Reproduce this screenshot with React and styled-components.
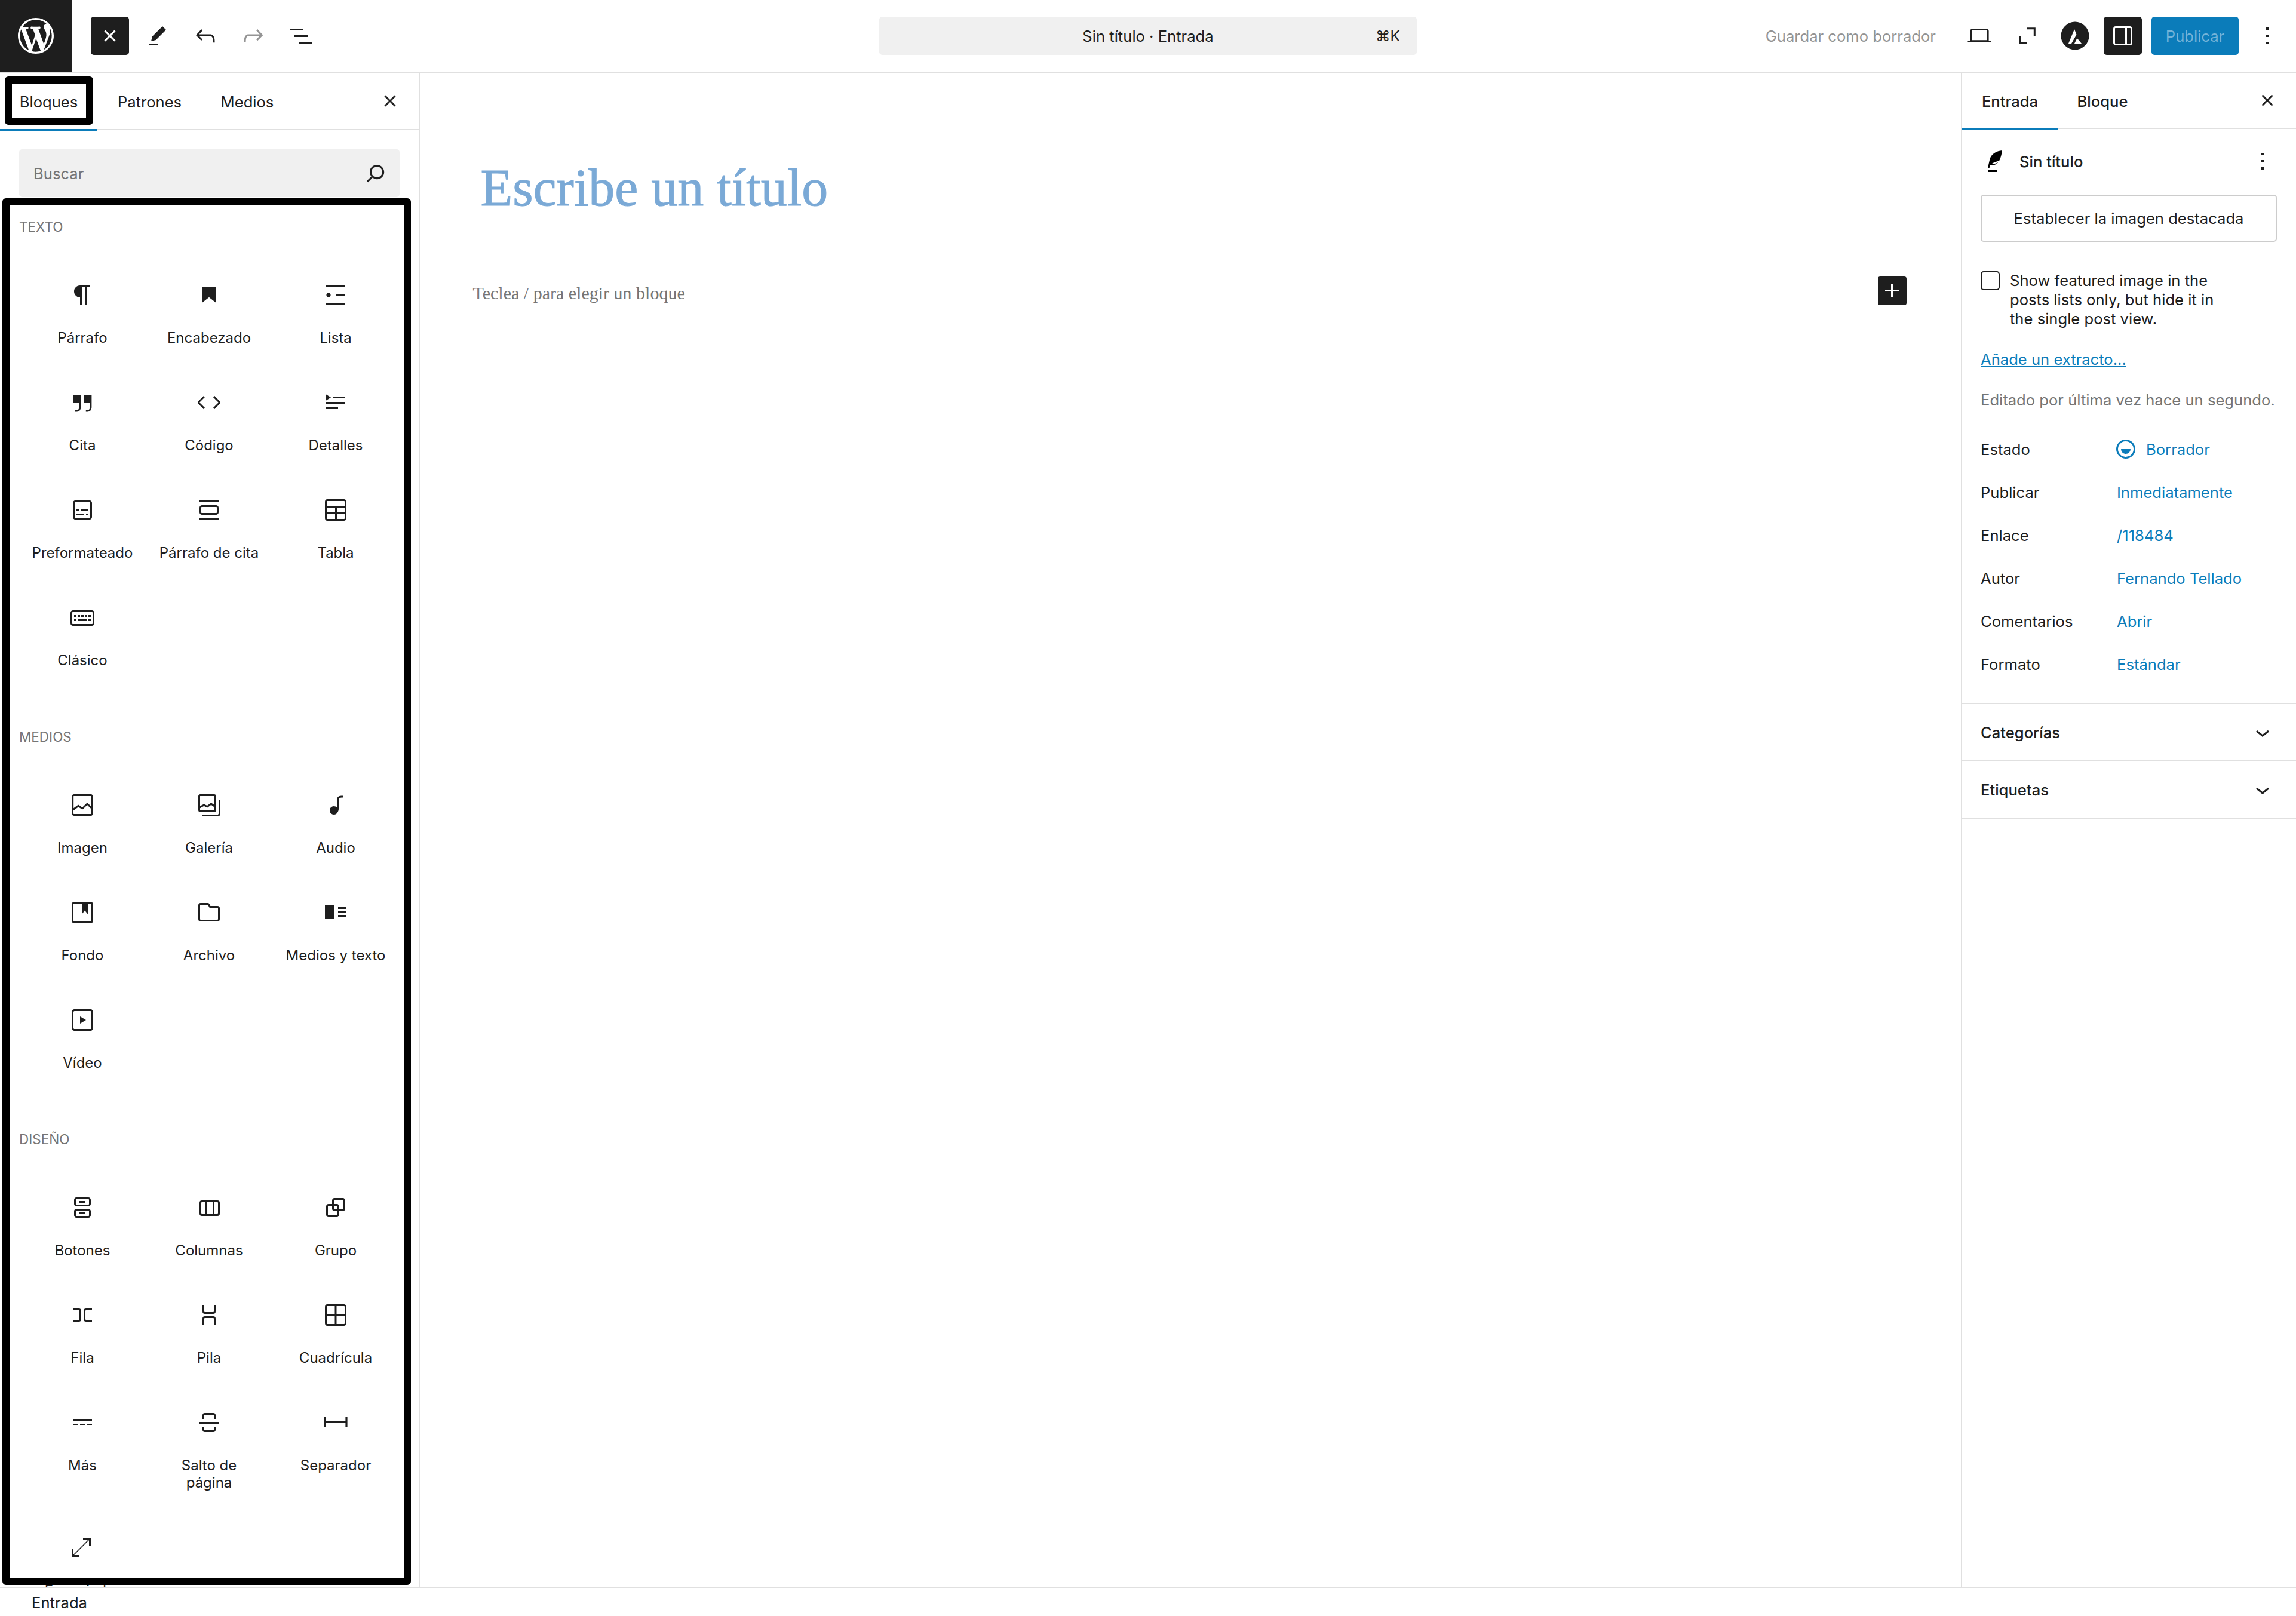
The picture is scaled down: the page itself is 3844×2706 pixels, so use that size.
import React from 'react';
import styled, { createGlobalStyle } from 'styled-components';

const GlobalStyle = createGlobalStyle`
  * { box-sizing: border-box; }
  html, body { margin: 0; padding: 0; background: #fff; }
  body { font-family: Inter, "Liberation Sans", sans-serif; color: #1e1e1e; }
`;

const ICONS = {
  closeSmall: 'M12 13.06l3.712 3.713 1.061-1.06L13.061 12l3.712-3.712-1.06-1.06L12 10.938 8.288 7.227l-1.061 1.06L10.939 12l-3.712 3.712 1.06 1.061L12 13.061z',
  edit: 'm19 7-3-3-8.5 8.5-1 4 4-1L19 7Zm-7 11.5H5V20h7v-1.5Z',
  undo: 'M18.3 11.7c-.6-.6-1.4-.9-2.3-.9H6.7l2.9-3.3-1.1-1-4.5 5L8.5 16l1-1-2.7-2.7H16c.5 0 .9.2 1.3.5 1 1 1 3.4 1 4.5v.3h1.5v-.2c0-1.5 0-4.3-1.5-5.7z',
  redo: 'M15.6 6.5l-1.1 1 2.9 3.3H8c-.9 0-1.7.3-2.3.9-1.4 1.5-1.4 4.2-1.4 5.6v.2h1.5v-.3c0-1.1 0-3.5 1-4.5.3-.3.7-.5 1.3-.5h9.2L14.5 15l1.1 1.1 4.6-4.6-4.6-5z',
  listView: 'M3 6h11v1.5H3V6zm3.5 5.5h11V13h-11v-1.5zM21 17H10v1.5h11V17z',
  search: 'M13 5c-3.3 0-6 2.7-6 6 0 1.4.5 2.7 1.3 3.7l-3.8 3.8 1.1 1.1 3.8-3.8c1 .8 2.3 1.3 3.7 1.3 3.3 0 6-2.7 6-6S16.3 5 13 5zm0 10.5c-2.5 0-4.5-2-4.5-4.5s2-4.5 4.5-4.5 4.5 2 4.5 4.5-2 4.5-4.5 4.5z',
  laptop: 'M20.5 16h-.7V8c0-1.1-.9-2-2-2H6.2c-1.1 0-2 .9-2 2v8h-.7c-.8 0-1.5.7-1.5 1.5h20c0-.8-.7-1.5-1.5-1.5zM5.7 8c0-.3.2-.5.5-.5h11.6c.3 0 .5.2.5.5v7.6H5.7V8z',
  fullscreen: 'M12 5.1h6.9V12h-1.5V6.6H12zM12 18.9H5.1V12h1.5v5.4H12z',
  drawer: 'M18 4H6c-1.1 0-2 .9-2 2v12c0 1.1.9 2 2 2h12c1.1 0 2-.9 2-2V6c0-1.1-.9-2-2-2zm-4 14.5H6c-.3 0-.5-.2-.5-.5V6c0-.3.2-.5.5-.5h8v13zm4.5-.5c0 .3-.2.5-.5.5h-2.5v-13H18c.3 0 .5.2.5.5v12z',
  dots: 'M13 19h-2v-2h2v2zm0-6h-2v-2h2v2zm0-6h-2V5h2v2z',
  chevron: 'M17.5 11.6L12 16l-5.5-4.4.9-1.2L12 14l4.5-3.6 1 1.2z',
  plus: 'M11 12.5V17.5H12.5V12.5H17.5V11H12.5V6H11V11H6V12.5H11Z',
  draft: 'M12 18.5a6.5 6.5 0 1 1 0-13 6.5 6.5 0 0 1 0 13ZM4 12a8 8 0 1 1 16 0 8 8 0 0 1-16 0Zm8 4a4 4 0 0 0 4-4H8a4 4 0 0 0 4 4Z',
  paragraph: 'm9.99609 14v-.2251l.00391.0001v6.225h1.5v-14.5h2.5v14.5h1.5v-14.5h3v-1.5h-8.50391c-2.76142 0-5 2.23858-5 5 0 2.7614 2.23858 5 5 5z',
  heading: 'M6 5V18.5911L12 13.8473L18 18.5911V5H6Z',
  list: 'M4 4h16v1.5H4zM4 18.5h16V20H4zM12 11.2h8v1.5h-8zM6 10.2a1.8 1.8 0 1 0 0 3.6 1.8 1.8 0 0 0 0-3.6z',
  quote: 'M13 6v6h5.2v4c0 .8-.2 1.4-.5 1.7-.6.6-1.6.6-2.5.5h-.3v1.5h.5c1 0 2.3-.1 3.3-1 .6-.6 1-1.6 1-2.7V6H13zm-9 6h5.2v4c0 .8-.2 1.4-.5 1.7-.6.6-1.6.6-2.5.5h-.3v1.5h.5c1 0 2.3-.1 3.3-1 .6-.6 1-1.6 1-2.7V6H4v6z',
  code: 'M20.8 10.7l-4.3-4.3-1.1 1.1 4.3 4.3c.1.1.1.3 0 .4l-4.3 4.3 1.1 1.1 4.3-4.3c.7-.8.7-1.9 0-2.6zM4.2 11.8l4.3-4.3-1-1-4.3 4.3c-.7.7-.7 1.8 0 2.5l4.3 4.3 1.1-1.1-4.3-4.3c-.2-.1-.2-.3-.1-.4z',
  details: 'M4 16h10v1.5H4V16Zm0-4.5h16V13H4v-1.5ZM10 7h10v1.5H10V7ZM4 5.25l4 2.5-4 2.5v-5Z',
  preformatted: 'M18 4H6c-1.1 0-2 .9-2 2v12c0 1.1.9 2 2 2h12c1.1 0 2-.9 2-2V6c0-1.1-.9-2-2-2zm.5 14c0 .3-.2.5-.5.5H6c-.3 0-.5-.2-.5-.5V6c0-.3.2-.5.5-.5h12c.3 0 .5.2.5.5v12zM7 16.5h6V15H7v1.5zm4-4h6V11h-6v1.5zM9 11H7v1.5h2V11zm6 5.5h2V15h-2v1.5z',
  pullquote: 'M18 8H6c-1.1 0-2 .9-2 2v4c0 1.1.9 2 2 2h12c1.1 0 2-.9 2-2v-4c0-1.1-.9-2-2-2zm.5 6c0 .3-.2.5-.5.5H6c-.3 0-.5-.2-.5-.5v-4c0-.3.2-.5.5-.5h12c.3 0 .5.2.5.5v4zM4 4v1.5h16V4H4zm0 16h16v-1.5H4V20z',
  table: 'M19 3H5c-1.1 0-2 .9-2 2v14c0 1.1.9 2 2 2h14c1.1 0 2-.9 2-2V5c0-1.1-.9-2-2-2zM5 4.5h14c.3 0 .5.2.5.5v3.5h-15V5c0-.3.2-.5.5-.5zm8 5.5h6.5v3.5H13V10zm-1.5 3.5h-7V10h7v3.5zm-7 5.5v-4h7v4.5H5c-.3 0-.5-.2-.5-.5zm14.5.5h-6V15h6.5v4c0 .3-.2.5-.5.5z',
  classic: 'M20 6H4c-1.1 0-2 .9-2 2v9c0 1.1.9 2 2 2h16c1.1 0 2-.9 2-2V8c0-1.1-.9-2-2-2zm.5 11c0 .3-.2.5-.5.5H4c-.3 0-.5-.2-.5-.5V8c0-.3.2-.5.5-.5h16c.3 0 .5.2.5.5v9zM10 10H8v2h2v-2zm-5 2h2v-2H5v2zm8-2h-2v2h2v-2zm-5 5h8v-2H8v2zm6-3h2v-2h-2v2zm3 0h2v-2h-2v2zm0 3h2v-2h-2v2zM5 15h2v-2H5v2z',
  image: 'M19 3H5c-1.1 0-2 .9-2 2v14c0 1.1.9 2 2 2h14c1.1 0 2-.9 2-2V5c0-1.1-.9-2-2-2zM5 4.5h14c.3 0 .5.2.5.5v8.4l-3-2.9c-.3-.3-.8-.3-1 0L11.9 14 9 12c-.3-.2-.6-.2-.8 0l-3.6 2.6V5c-.1-.3.1-.5.4-.5zm14 15H5c-.3 0-.5-.2-.5-.5v-2.4l4.1-3 3 1.9c.3.2.7.2.9-.1L16 12l3.5 3.4V19c0 .3-.2.5-.5.5z',
  gallery: 'M16.375 4.5H4.625a.125.125 0 0 0-.125.125v8.254l2.859-1.54a.75.75 0 0 1 .68-.016l2.384 1.142 2.89-2.074a.75.75 0 0 1 .874 0l2.313 1.66V4.625a.125.125 0 0 0-.125-.125Zm.125 9.398-2.75-1.975-2.813 2.02a.75.75 0 0 1-.76.067l-2.444-1.17L4.5 14.583v1.792c0 .069.056.125.125.125h11.75a.125.125 0 0 0 .125-.125v-2.477ZM4.625 3C3.728 3 3 3.728 3 4.625v11.75C3 17.273 3.728 18 4.625 18h11.75c.898 0 1.625-.727 1.625-1.625V4.625C18 3.728 17.273 3 16.375 3H4.625ZM20 8v11c0 .69-.31 1-.999 1H6v1.5h13.001c1.52 0 2.499-.982 2.499-2.5V8H20Z',
  audio: 'M17.7 4.3c-1.2 0-2.8 0-3.8 1-.6.6-.9 1.5-.9 2.6V14c-.6-.6-1.5-1-2.5-1C8.6 13 7 14.6 7 16.5S8.6 20 10.5 20c1.5 0 2.8-1 3.3-2.3.5-.8.7-1.8.7-2.5V7.9c0-.7.2-1.2.5-1.6.6-.6 1.8-.6 2.8-.6h.3V4.3h-.4z',
  cover: 'M18.7 3H5.3C4 3 3 4 3 5.3v13.4C3 20 4 21 5.3 21h13.4c1.3 0 2.3-1 2.3-2.3V5.3C21 4 20 3 18.7 3zm.8 15.7c0 .4-.4.8-.8.8H5.3c-.4 0-.8-.4-.8-.8V5.3c0-.4.4-.8.8-.8h6.2v8.9l2.5-3.1 2.5 3.1V4.5h2.2c.4 0 .8.4.8.8v13.4z',
  file: 'M12.848 8a1 1 0 0 1-.914-.594l-.723-1.63a.5.5 0 0 0-.447-.276H5a.5.5 0 0 0-.5.5v11.5a.5.5 0 0 0 .5.5h14a.5.5 0 0 0 .5-.5v-9A.5.5 0 0 0 19 8h-6.152Zm.612-1.5a.5.5 0 0 1-.462-.31l-.445-1.084A2 2 0 0 0 10.763 4H5a2 2 0 0 0-2 2v11.5a2 2 0 0 0 2 2h14a2 2 0 0 0 2-2v-9a2 2 0 0 0-2-2h-5.54Z',
  media: 'M3 6v11.5h8V6H3Zm11 3h7V7.5h-7V9Zm7 3.5h-7V11h7v1.5ZM14 16h7v-1.5h-7V16Z',
  video: 'M18.7 3H5.3C4 3 3 4 3 5.3v13.4C3 20 4 21 5.3 21h13.4c1.3 0 2.3-1 2.3-2.3V5.3C21 4 20 3 18.7 3zm.8 15.7c0 .4-.4.8-.8.8H5.3c-.4 0-.8-.4-.8-.8V5.3c0-.4.4-.8.8-.8h13.4c.4 0 .8.4.8.8v13.4zM10 15l5-3-5-3v6z',
  buttons: 'M14.5 17.5H9.5V16H14.5V17.5ZM14.5 8H9.5V6.5H14.5V8ZM7 3.5H17C18.1046 3.5 19 4.39543 19 5.5V9C19 10.1046 18.1046 11 17 11H7C5.89543 11 5 10.1046 5 9V5.5C5 4.39543 5.89543 3.5 7 3.5ZM17 5H7C6.72386 5 6.5 5.22386 6.5 5.5V9C6.5 9.27614 6.72386 9.5 7 9.5H17C17.2761 9.5 17.5 9.27614 17.5 9V5.5C17.5 5.22386 17.2761 5 17 5ZM7 13H17C18.1046 13 19 13.8954 19 15V18.5C19 19.6046 18.1046 20.5 17 20.5H7C5.89543 20.5 5 19.6046 5 18.5V15C5 13.8954 5.89543 13 7 13ZM17 14.5H7C6.72386 14.5 6.5 14.7239 6.5 15V18.5C6.5 18.7761 6.72386 19 7 19H17C17.2761 19 17.5 18.7761 17.5 18.5V15C17.5 14.7239 17.2761 14.5 17 14.5Z',
  columns: 'M15 7.5h-5v10h5v-10Zm1.5 0v10H19a.5.5 0 0 0 .5-.5V8a.5.5 0 0 0-.5-.5h-2.5ZM6 7.5h2.5v10H6a.5.5 0 0 1-.5-.5V8a.5.5 0 0 1 .5-.5ZM6 6h13a2 2 0 0 1 2 2v9a2 2 0 0 1-2 2H6a2 2 0 0 1-2-2V8a2 2 0 0 1 2-2Z',
  group: 'M18 4h-7c-1.1 0-2 .9-2 2v3H6c-1.1 0-2 .9-2 2v7c0 1.1.9 2 2 2h7c1.1 0 2-.9 2-2v-3h3c1.1 0 2-.9 2-2V6c0-1.1-.9-2-2-2zm-4.5 14c0 .3-.2.5-.5.5H6c-.3 0-.5-.2-.5-.5v-7c0-.3.2-.5.5-.5h3V13c0 1.1.9 2 2 2h2.5v3zm0-4.5H11c-.3 0-.5-.2-.5-.5v-2.5H13c.3 0 .5.2.5.5v2.5zm5-.5c0 .3-.2.5-.5.5h-3V11c0-1.1-.9-2-2-2h-2.5V6c0-.3.2-.5.5-.5h7c.3 0 .5.2.5.5v7z',
  row: 'M4 6.5h5a2 2 0 0 1 2 2v7a2 2 0 0 1-2 2H4V16h5a.5.5 0 0 0 .5-.5v-7A.5.5 0 0 0 9 8H4V6.5Zm16 0h-5a2 2 0 0 0-2 2v7a2 2 0 0 0 2 2h5V16h-5a.5.5 0 0 1-.5-.5v-7A.5.5 0 0 1 15 8h5V6.5Z',
  stack: 'M17.5 4v5a2 2 0 0 1-2 2h-7a2 2 0 0 1-2-2V4H8v5a.5.5 0 0 0 .5.5h7A.5.5 0 0 0 16 9V4h1.5Zm0 16v-5a2 2 0 0 0-2-2h-7a2 2 0 0 0-2 2v5H8v-5a.5.5 0 0 1 .5-.5h7a.5.5 0 0 1 .5.5v5h1.5Z',
  grid: 'M3 5c0-1.10457.89543-2 2-2h14c1.1046 0 2 .89543 2 2v14c0 1.1046-.8954 2-2 2H5c-1.10457 0-2-.8954-2-2zm2-.5h6.25v6.75H4.5V5c0-.27614.22386-.5.5-.5zm-.5 8.25V19c0 .2761.22386.5.5.5h6.25v-6.75zm8.25 0v6.75H19c.2761 0 .5-.2239.5-.5v-6.25zm0-1.5h6.75V5c0-.27614-.2239-.5-.5-.5h-6.25z',
  more: 'M4 9v1.5h16V9H4zm12 5.5h4V13h-4v1.5zm-6 0h4V13h-4v1.5zm-6 0h4V13H4v1.5z',
  pageBreak: 'M17.5 9V6a2 2 0 0 0-2-2h-7a2 2 0 0 0-2 2v3H8V6a.5.5 0 0 1 .5-.5h7a.5.5 0 0 1 .5.5v3h1.5Zm0 6.5V18a2 2 0 0 1-2 2h-7a2 2 0 0 1-2-2v-2.5H8V18a.5.5 0 0 0 .5.5h7a.5.5 0 0 0 .5-.5v-2.5h1.5ZM4 13h16v-1.5H4V13Z',
  separator: 'M20.2 7v4H3.8V7H2.2v9h1.6v-3.5h16.4V16h1.6V7z',
  spacer: 'M12.5 4v1.5h4.44L4.5 17.94V13.5H3V20h6.5v-1.5H5.06L17.5 6.06v4.44H19V4z',
};

const WP_LOGO = 'M20 10c0-5.51-4.49-10-10-10C4.48 0 0 4.49 0 10c0 5.52 4.48 10 10 10 5.51 0 10-4.48 10-10zM7.78 15.37L4.37 6.22c.55-.02 1.17-.08 1.17-.08.5-.06.44-1.13-.06-1.11 0 0-1.45.11-2.37.11-.18 0-.37 0-.58-.01C4.12 2.69 6.87 1.11 10 1.11c2.33 0 4.45.87 6.05 2.34-.68-.11-1.65.39-1.65 1.58 0 .74.45 1.36.9 2.1.35.61.55 1.36.55 2.46 0 1.49-1.4 5-1.4 5l-3.03-8.37c.54-.02.82-.17.82-.17.5-.05.44-1.25-.06-1.22 0 0-1.44.12-2.38.12-.87 0-2.33-.12-2.33-.12-.5-.03-.56 1.2-.06 1.22l.92.08 1.26 3.41zM17.41 10c.24-.64.74-1.87.43-4.25.7 1.29 1.05 2.71 1.05 4.25 0 3.29-1.73 6.24-4.4 7.78.97-2.59 1.94-5.2 2.92-7.78zM6.1 18.09C3.12 16.65 1.11 13.53 1.11 10c0-1.3.23-2.48.72-3.59C3.25 10.3 4.67 14.2 6.1 18.09zm4.03-6.63l2.58 6.98c-.86.29-1.76.45-2.71.45-.79 0-1.57-.11-2.29-.33.81-2.38 1.62-4.74 2.42-7.1z';

const SECTIONS = [
  {
    title: 'Texto',
    gap: 0,
    items: [
      ['Párrafo', 'paragraph'], ['Encabezado', 'heading'], ['Lista', 'list'],
      ['Cita', 'quote'], ['Código', 'code'], ['Detalles', 'details'],
      ['Preformateado', 'preformatted'], ['Párrafo de cita', 'pullquote'], ['Tabla', 'table'],
      ['Clásico', 'classic'],
    ],
  },
  {
    title: 'Medios',
    gap: 80,
    items: [
      ['Imagen', 'image'], ['Galería', 'gallery'], ['Audio', 'audio'],
      ['Fondo', 'cover'], ['Archivo', 'file'], ['Medios y texto', 'media'],
      ['Vídeo', 'video'],
    ],
  },
  {
    title: 'Diseño',
    gap: 80,
    items: [
      ['Botones', 'buttons'], ['Columnas', 'columns'], ['Grupo', 'group'],
      ['Fila', 'row'], ['Pila', 'stack'], ['Cuadrícula', 'grid'],
      ['Más', 'more'], ['Salto de página', 'pageBreak'], ['Separador', 'separator'],
      ['Espaciador', 'spacer'],
    ],
  },
];

const SUMMARY = [
  ['Publicar', 'Inmediatamente'],
  ['Enlace', '/118484'],
  ['Autor', 'Fernando Tellado'],
  ['Comentarios', 'Abrir'],
  ['Formato', 'Estándar'],
];

const Page = styled.div`
  width: 3844px;
  height: 2706px;
  display: flex;
  flex-direction: column;
  overflow: hidden;
  background: #fff;
  font-size: 25.6px;
`;

const TopBar = styled.header`
  flex: none;
  height: 122.5px;
  display: grid;
  grid-template-columns: 1fr 900px 1fr;
  align-items: center;
  border-bottom: 2.5px solid #e0e0e0;
`;

const BarSide = styled.div`
  display: flex;
  align-items: center;
  gap: 16px;
  height: 120px;
  justify-content: ${p => (p.$end ? 'flex-end' : 'flex-start')};
  padding-right: ${p => (p.$end ? '16px' : '0')};
`;

const LogoBox = styled.div`
  width: 120px;
  height: 120px;
  background: #1e1e1e;
  display: flex;
  align-items: center;
  justify-content: center;
  margin-right: 16px;
`;

const IconButton = styled.div`
  flex: none;
  width: 64px;
  height: 64px;
  border-radius: 5px;
  display: flex;
  align-items: center;
  justify-content: center;
  background: ${p => (p.$dark ? '#1e1e1e' : 'transparent')};
  color: ${p => (p.$dark ? '#fff' : '#1e1e1e')};
`;

const CommandPill = styled.div`
  height: 64px;
  border-radius: 5px;
  background: #f0f0f0;
  display: flex;
  align-items: center;
  justify-content: center;
  position: relative;
`;

const Shortcut = styled.span`
  position: absolute;
  right: 28px;
  top: 50%;
  transform: translateY(-50%);
  font-size: 24.5px;
`;

const DraftLabel = styled.span`
  color: #949494;
  margin-right: 25px;
`;

const PublishButton = styled.div`
  width: 146px;
  height: 64px;
  border-radius: 5px;
  background: #0b7cba;
  color: #74b3d8;
  display: flex;
  align-items: center;
  justify-content: center;
`;

const Main = styled.main`
  flex: 1;
  min-height: 0;
  display: flex;
`;

const Inserter = styled.aside`
  flex: none;
  width: 702.5px;
  position: relative;
  overflow: hidden;
  display: flex;
  flex-direction: column;
  border-right: 2.5px solid #e0e0e0;
`;

const TabRow = styled.div`
  flex: none;
  height: ${p => p.$height};
  display: flex;
  align-items: stretch;
  border-bottom: 2.5px solid #e0e0e0;
`;

const Tab = styled.div`
  width: ${p => p.$width};
  margin-bottom: -2.5px;
  display: flex;
  align-items: center;
  justify-content: center;
  font-weight: ${p => p.$weight || 400};
  border-bottom: 3px solid ${p => (p.$active ? '#0b7cba' : 'transparent')};
  padding-top: 3px;
`;

const TabClose = styled.div`
  margin-left: auto;
  width: 64px;
  display: flex;
  align-items: center;
  justify-content: center;
  margin-right: ${p => p.$right};
`;

const SearchBox = styled.div`
  flex: none;
  margin: 32px 32px 0;
  height: 80px;
  border-radius: 5px;
  background: #f0f0f0;
  display: flex;
  align-items: center;
  justify-content: space-between;
  padding: 0 16px 0 24px;
  color: #757575;
`;

const BlockList = styled.div`
  flex: 1;
  min-height: 0;
  overflow: hidden;
  padding: 34px 32px 0;
`;

const Section = styled.section`
  margin-top: ${p => p.$gap}px;
`;

const SectionTitle = styled.div`
  height: 32px;
  line-height: 32px;
  font-size: 22.5px;
  text-transform: uppercase;
  color: #757575;
  margin-bottom: 22px;
`;

const BlockGrid = styled.div`
  display: grid;
  grid-template-columns: repeat(3, 212px);
`;

const BlockItem = styled.div`
  padding: 46px 8px 18.5px;
  display: flex;
  flex-direction: column;
  align-items: center;
`;

const BlockIcon = styled.div`
  height: 60px;
  display: flex;
  align-items: center;
  justify-content: center;
  margin-bottom: 26.5px;
`;

const BlockLabel = styled.div`
  max-width: 172px;
  font-size: 24px;
  line-height: 29px;
  text-align: center;
`;

const Outline = styled.div`
  position: absolute;
  left: ${p => p.$left}px;
  top: ${p => p.$top}px;
  width: ${p => p.$width}px;
  height: ${p => p.$height}px;
  border: 12px solid #000;
  border-radius: 6px;
  pointer-events: none;
`;

const Canvas = styled.div`
  flex: 1;
  min-width: 0;
  padding: 139px 91px 0 89px;
`;

const PostTitle = styled.h1`
  margin: 0 0 0 13px;
  font-family: "Liberation Serif", serif;
  font-weight: 400;
  font-size: 88px;
  line-height: 106px;
  color: #7aa9d6;
  -webkit-text-stroke: 1px #7aa9d6;
`;

const ParagraphRow = styled.div`
  margin-top: 95.5px;
  display: flex;
  align-items: center;
  justify-content: space-between;
`;

const Placeholder = styled.span`
  margin-top: 8px;
  font-family: "Liberation Serif", serif;
  font-size: 30px;
  color: #757575;
`;

const PlusButton = styled.div`
  width: 48px;
  height: 48px;
  border-radius: 4px;
  background: #1e1e1e;
  color: #fff;
  display: flex;
  align-items: center;
  justify-content: center;
`;

const Settings = styled.aside`
  flex: none;
  width: 561px;
  border-left: 2.5px solid #e0e0e0;
  display: flex;
  flex-direction: column;
`;

const Body = styled.div`
  padding: 0 32px 0 31px;
  display: flex;
  flex-direction: column;
`;

const PostCard = styled.div`
  display: flex;
  align-items: center;
  height: 48px;
  margin-top: 30px;
  font-weight: 500;
`;

const PostName = styled.span`
  margin-left: 17px;
  flex: 1;
`;

const FeaturedButton = styled.div`
  margin-top: 32px;
  height: 79px;
  border: 2.5px solid #ccc;
  border-radius: 5px;
  display: flex;
  align-items: center;
  justify-content: center;
`;

const CheckRow = styled.div`
  margin-top: 49px;
  display: flex;
  gap: 17px;
`;

const CheckBox = styled.div`
  flex: none;
  width: 32px;
  height: 32px;
  border: 2.5px solid #1e1e1e;
  border-radius: 5px;
`;

const CheckText = styled.div`
  width: 350px;
  line-height: 32px;
`;

const ExcerptLink = styled.a`
  margin-top: 36px;
  line-height: 32px;
  color: #0b7cba;
  text-decoration: underline;
`;

const Edited = styled.div`
  margin-top: 36px;
  line-height: 32px;
  color: #757575;
  white-space: nowrap;
`;

const SummaryList = styled.div`
  margin-top: 30px;
  display: flex;
  flex-direction: column;
`;

const SummaryRow = styled.div`
  height: 72px;
  display: flex;
  align-items: center;
`;

const SummaryLabel = styled.span`
  width: 228px;
`;

const SummaryValue = styled.span`
  color: #0b7cba;
  display: flex;
  align-items: center;
  gap: 10px;
`;

const DraftIcon = styled.span`
  display: flex;
  margin-left: -9px;
`;

const Accordion = styled.div`
  height: 96px;
  display: flex;
  align-items: center;
  justify-content: space-between;
  padding: 0 32px 0 31px;
  border-bottom: 2.5px solid #e0e0e0;
  font-weight: 500;
`;

const AccordionTop = styled.div`
  margin-top: 29px;
  border-top: 2.5px solid #e0e0e0;
`;

const Footer = styled.footer`
  flex: none;
  height: 49px;
  border-top: 2.5px solid #e0e0e0;
  padding-left: 53px;
  line-height: 50px;
`;

function WpIcon({ name, size = 48, color = 'currentColor' }) {
  return (
    <svg width={size} height={size} viewBox="0 0 24 24" fill={color} fillRule="evenodd">
      <path d={ICONS[name]} />
    </svg>
  );
}

function AstraIcon() {
  return (
    <svg width="64" height="64" viewBox="2 2 64 64">
      <circle cx="34" cy="34" r="23.5" fill="#1e1e1e" />
      <path d="M23 47 33 23l3.5 9-8.5 15zM37.5 38l7.5 9H33z" fill="#fff" />
    </svg>
  );
}

function FeatherIcon() {
  return (
    <svg width="48" height="48" viewBox="0 0 48 48">
      <path d="M36 6C26 7 17 12 15 22l-3 13 2.5.5 1.5-5c10 1.500 17-3.500 20-24.500Z" fill="#000" />
      <path d="M19 28c3-2 8-4 13-5-2 3-6 6-13 5Z" fill="#fff" />
      <rect x="12" y="39" width="16" height="3" fill="#000" />
    </svg>
  );
}

export default function App() {
  return (
    <Page>
      <GlobalStyle />
      <TopBar>
        <BarSide>
          <LogoBox>
            <svg width="60" height="60" viewBox="0 0 20 20" fill="#fff"><path d={WP_LOGO} /></svg>
          </LogoBox>
          <IconButton $dark><WpIcon name="closeSmall" /></IconButton>
          <IconButton><WpIcon name="edit" /></IconButton>
          <IconButton><WpIcon name="undo" /></IconButton>
          <IconButton><WpIcon name="redo" color="#949494" /></IconButton>
          <IconButton><WpIcon name="listView" /></IconButton>
        </BarSide>
        <CommandPill>
          Sin título · Entrada
          <Shortcut>⌘K</Shortcut>
        </CommandPill>
        <BarSide $end>
          <DraftLabel>Guardar como borrador</DraftLabel>
          <IconButton><WpIcon name="laptop" /></IconButton>
          <IconButton><WpIcon name="fullscreen" /></IconButton>
          <IconButton><AstraIcon /></IconButton>
          <IconButton $dark><WpIcon name="drawer" /></IconButton>
          <PublishButton>Publicar</PublishButton>
          <IconButton><WpIcon name="dots" /></IconButton>
        </BarSide>
      </TopBar>

      <Main>
        <Inserter>
          <TabRow $height="95.5px">
            <Tab $width="163px" $active>Bloques</Tab>
            <Tab $width="175px">Patrones</Tab>
            <Tab $width="152px">Medios</Tab>
            <TabClose $right="16px"><WpIcon name="closeSmall" /></TabClose>
          </TabRow>
          <SearchBox>
            Buscar
            <WpIcon name="search" color="#1e1e1e" />
          </SearchBox>
          <BlockList>
            {SECTIONS.map(section => (
              <Section key={section.title} $gap={section.gap}>
                <SectionTitle>{section.title}</SectionTitle>
                <BlockGrid>
                  {section.items.map(([label, icon]) => (
                    <BlockItem key={label}>
                      <BlockIcon><WpIcon name={icon} /></BlockIcon>
                      <BlockLabel>{label}</BlockLabel>
                    </BlockItem>
                  ))}
                </BlockGrid>
              </Section>
            ))}
          </BlockList>
          <Outline $left={8} $top={5.5} $width={148} $height={80.5} />
          <Outline $left={4} $top={209.5} $width={684} $height={2322} />
        </Inserter>

        <Canvas>
          <PostTitle>Escribe un título</PostTitle>
          <ParagraphRow>
            <Placeholder>Teclea / para elegir un bloque</Placeholder>
            <PlusButton><WpIcon name="plus" /></PlusButton>
          </ParagraphRow>
        </Canvas>

        <Settings>
          <TabRow $height="93.5px">
            <Tab $width="160px" $active $weight={500}>Entrada</Tab>
            <Tab $width="150px" $weight={500}>Bloque</Tab>
            <TabClose $right="16px"><WpIcon name="closeSmall" /></TabClose>
          </TabRow>
          <Body>
            <PostCard>
              <FeatherIcon />
              <PostName>Sin título</PostName>
              <WpIcon name="dots" />
            </PostCard>
            <FeaturedButton>Establecer la imagen destacada</FeaturedButton>
            <CheckRow>
              <CheckBox />
              <CheckText>Show featured image in the posts lists only, but hide it in the single post view.</CheckText>
            </CheckRow>
            <ExcerptLink>Añade un extracto...</ExcerptLink>
            <Edited>Editado por última vez hace un segundo.</Edited>
            <SummaryList>
              <SummaryRow>
                <SummaryLabel>Estado</SummaryLabel>
                <SummaryValue>
                  <DraftIcon><WpIcon name="draft" /></DraftIcon>
                  Borrador
                </SummaryValue>
              </SummaryRow>
              {SUMMARY.map(([label, value]) => (
                <SummaryRow key={label}>
                  <SummaryLabel>{label}</SummaryLabel>
                  <SummaryValue>{value}</SummaryValue>
                </SummaryRow>
              ))}
            </SummaryList>
          </Body>
          <AccordionTop />
          <Accordion>Categorías<WpIcon name="chevron" /></Accordion>
          <Accordion>Etiquetas<WpIcon name="chevron" /></Accordion>
        </Settings>
      </Main>

      <Footer>Entrada</Footer>
    </Page>
  );
}
